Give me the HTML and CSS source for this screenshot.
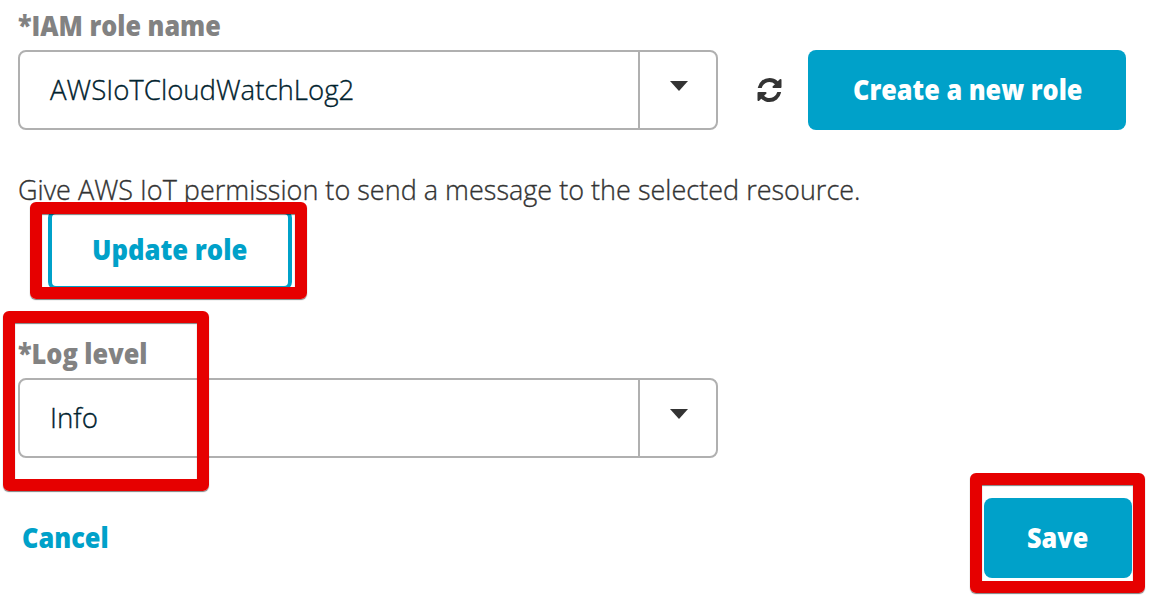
FILE: index.html
```html
<!DOCTYPE html>
<html lang="en">
<head>
<meta charset="utf-8">
<title>Configure logging</title>
<link rel="stylesheet" href="styles.css">
</head>
<body>
<main class="form">
  <label class="label"><span class="text t-iam">*IAM role name</span></label>
  <div class="row">
    <div class="select">
      <div class="value"><span class="text t-watch">AWSIoTCloudWatchLog2</span></div>
      <div class="toggle"><svg class="caret" viewBox="0 0 18 10"><path d="M0 0h18L9 10z"/></svg></div>
    </div>
    <svg class="refresh" viewBox="0 0 1536 1536"><path d="M1511 928q0 5-1 7-64 268-268 434.500T764 1536q-146 0-282.500-55T238 1324l-129 129q-19 19-45 19t-45-19-19-45V960q0-26 19-45t45-19h448q26 0 45 19t19 45-19 45l-137 137q71 66 161 102t187 36q134 0 250-65t186-179q11-17 53-117 8-23 30-23h192q13 0 22.500 9.500t9.500 22.500zm25-800v448q0 26-19 45t-45 19h-448q-26 0-45-19t-19-45 19-45l138-138Q969 256 768 256q-134 0-250 65T332 500q-11 17-53 117-8 23-30 23H50q-13 0-22.500-9.500T18 608v-7q65-268 270-434.500T768 0q146 0 284 55.500T1297 212l130-129q19-19 45-19t45 19 19 45z"/></svg>
    <button class="btn primary create"><span class="text t-create">Create a new role</span></button>
  </div>
  <p class="hint"><span class="text t-hint">Give AWS IoT permission to send a message to the selected resource.</span></p>
  <button class="btn outline"><span class="text t-update">Update role</span></button>
  <label class="label level"><span class="text t-level">*Log level</span></label>
  <div class="select">
    <div class="value"><span class="text t-info">Info</span></div>
    <div class="toggle"><svg class="caret" viewBox="0 0 18 10"><path d="M0 0h18L9 10z"/></svg></div>
  </div>
  <footer class="actions">
    <a class="cancel"><span class="text t-cancel">Cancel</span></a>
    <button class="btn primary save"><span class="text t-save">Save</span></button>
  </footer>
</main>
<div class="mark mark-update"></div>
<div class="mark mark-level"></div>
<div class="mark mark-save"></div>
</body>
</html>
```
FILE: styles.css
```css
* { box-sizing: border-box; }
body {
  margin: 0;
  height: 597px;
  overflow: hidden;
  position: relative;
  background: #fff;
  color: #333;
  font: 300 28px/38px "Open Sans", "Noto Sans", sans-serif;
}
.form { display: flex; flex-direction: column; padding: 6px 18px 0; }
.text { display: inline-block; white-space: nowrap; transform-origin: left center; }
.t-iam { transform: scaleX(.899); }
.t-watch { transform: scaleX(.985); }
.t-create { transform: scaleX(.902); }
.t-hint { transform: scaleX(.965); }
.t-update { transform: scaleX(.917); }
.t-level { transform: scaleX(.904); }
.t-info { transform: scaleX(.99); }
.t-cancel { transform: scaleX(.905); }
.t-save { transform: scaleX(.9); }
.t-watch, .t-hint, .t-info { -webkit-text-stroke: .35px currentColor; }
.label { display: block; height: 44px; color: #828282; font-weight: 800; }
.row { display: flex; align-items: center; }
.select {
  display: flex;
  flex: none;
  width: 700px;
  height: 80px;
  border: 2px solid #b0b0b0;
  border-radius: 8px;
  color: #00222e;
}
.value { flex: 1; padding: 18px 0 0 30px; }
.toggle { width: 78px; border-left: 2px solid #b0b0b0; padding: 29px 0 0 30px; }
.caret { display: block; width: 18px; height: 10px; fill: #333; }
.refresh { width: 25px; height: 24px; margin: 0 26px 0 39px; fill: #333; }
.btn {
  display: flex;
  align-items: center;
  height: 80px;
  border: 0;
  border-radius: 8px;
  font: inherit;
  font-weight: 800;
}
.btn .text, .cancel .text { margin-bottom: 2px; }
.primary { background: #00a1c9; color: #fff; }
.create { width: 318px; padding: 0 0 0 45px; }
.hint { margin: 40px 0 0; height: 40px; }
.outline {
  width: 244px;
  margin-left: 30px;
  padding: 0 0 0 40px;
  background: #fff;
  border: 4px solid #00a1c9;
  color: #00a1c9;
}
.level { margin-top: 44px; }
.actions { display: flex; justify-content: space-between; align-items: center; margin-top: 40px; }
.cancel { color: #00a1c9; font-weight: 800; padding-left: 4px; }
.save { width: 148px; padding: 0 0 0 43px; }
.mark {
  position: absolute;
  border: 12px solid #e60000;
  border-radius: 6px;
  box-shadow: 0 1px 1px rgba(0, 0, 0, .5), inset 0 1px 1px rgba(0, 0, 0, .5);
}
.mark-update { left: 30px; top: 202px; width: 277px; height: 97px; }
.mark-level { left: 3px; top: 311px; width: 206px; height: 180px; }
.mark-save { left: 970px; top: 473px; width: 175px; height: 120px; }
```
